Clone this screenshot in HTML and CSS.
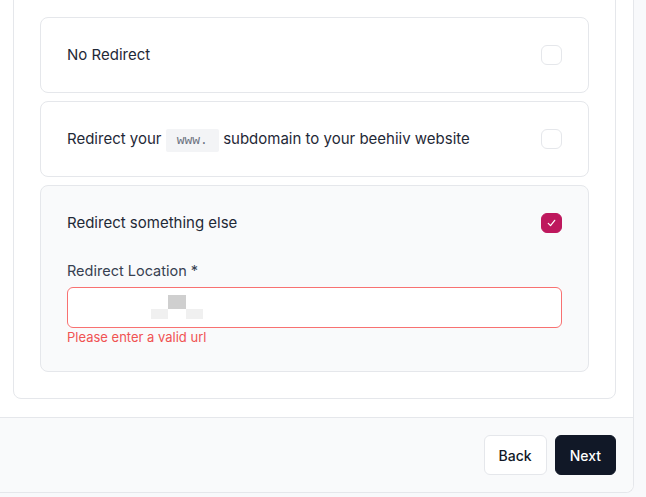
FILE: index.html
```html
<!DOCTYPE html>
<html lang="en">
<head>
<meta charset="utf-8">
<title>Redirect settings</title>
<link rel="stylesheet" href="styles.css">
</head>
<body>
<div class="panel">
  <div class="panel-body">
    <div class="card">
      <div class="option">
        <span class="option-text">No Redirect</span>
        <span class="checkbox"></span>
      </div>
      <div class="option">
        <span class="option-text">Redirect your <code class="code">www.</code> subdomain to your beehiiv website</span>
        <span class="checkbox"></span>
      </div>
      <div class="option option-active">
        <div class="option-row">
          <span class="option-text">Redirect something else</span>
          <span class="checkbox checked">
            <svg viewBox="0 0 20 20" width="20" height="20"><path d="M6.6 10.4l2.4 2.4 4.4-5.6" fill="none" stroke="#fff" stroke-width="1.3" stroke-linecap="round" stroke-linejoin="round"/></svg>
          </span>
        </div>
        <div class="field">
          <label class="field-label">Redirect Location *</label>
          <div class="input">
            <svg class="redacted" viewBox="0 0 52 24" width="52" height="24">
              <rect x="0" y="14" width="17" height="10" fill="#f0f0f0"/>
              <rect x="17" y="0" width="18" height="14" fill="#cfcfcf"/>
              <rect x="35" y="14" width="17" height="10" fill="#f0f0f0"/>
            </svg>
          </div>
          <p class="error">Please enter a valid url</p>
        </div>
      </div>
    </div>
  </div>
  <div class="footer">
    <button class="btn btn-secondary">Back</button>
    <button class="btn btn-primary">Next</button>
  </div>
</div>
</body>
</html>
```
FILE: styles.css
```css
* { box-sizing: border-box; }
html, body { margin: 0; padding: 0; }
body {
  background: #f8f9fb;
  font-family: Inter, "Noto Sans", "Liberation Sans", sans-serif;
  color: #1f2937;
  height: 497px;
  overflow: hidden;
}
.panel {
  width: 634px;
  background: #fff;
  border-right: 1px solid #e5e7eb;
  border-bottom: 1px solid #e5e7eb;
  border-bottom-right-radius: 8px;
  margin-top: -10px;
}
.panel-body {
  padding: 0 17px 18px 13px;
}
.card {
  border: 1px solid #e5e7eb;
  border-radius: 8px;
  padding: 26px;
  display: flex;
  flex-direction: column;
  gap: 8px;
}
.option {
  border: 1px solid #e5e7eb;
  border-radius: 8px;
  padding: 27px 26px;
  display: flex;
  align-items: center;
  justify-content: space-between;
  background: #fff;
}
.option-active {
  background: #f9fafb;
  flex-direction: column;
  align-items: stretch;
  padding-bottom: 26px;
}
.option-row {
  display: flex;
  align-items: center;
  justify-content: space-between;
}
.option-text {
  font-size: 15px;
  line-height: 20px;
  color: #1f2937;
}
.code {
  font-family: "Liberation Mono", "DejaVu Sans Mono", monospace;
  font-size: 13px;
  line-height: 15px;
  color: #6b7280;
  background: #f3f4f6;
  padding: 4px 11px 4px 11px;
  border-radius: 2px;
}
.checkbox {
  width: 21px;
  height: 20px;
  border: 1px solid #e5e7eb;
  border-radius: 6px;
  background: #fff;
  display: flex;
  align-items: center;
  justify-content: center;
  flex-shrink: 0;
}
.checkbox.checked {
  background: #be185d;
  border-color: #be185d;
}
.field {
  margin-top: 28px;
  display: flex;
  flex-direction: column;
}
.field-label {
  font-size: 14.5px;
  line-height: 20px;
  color: #374151;
  margin-bottom: 6px;
}
.input {
  height: 41px;
  border: 1px solid #f87171;
  border-radius: 6px;
  background: #fff;
  display: flex;
  align-items: center;
  padding-left: 83px;
}
.redacted { display: block; margin-top: -1px; }
.error {
  margin: 1px 0 0;
  font-size: 13px;
  line-height: 16px;
  color: #f05252;
}
.footer {
  border-top: 1px solid #e5e7eb;
  background: #f9fafb;
  padding: 17px 17px 17px;
  display: flex;
  justify-content: flex-end;
  gap: 8px;
  border-bottom-right-radius: 8px;
}
.btn {
  height: 40px;
  padding: 0 14px;
  border-radius: 6px;
  font-family: Inter, "Noto Sans", "Liberation Sans", sans-serif;
  font-size: 14px;
  font-weight: 500;
  cursor: pointer;
}
.btn-secondary {
  background: #fff;
  border: 1px solid #e5e7eb;
  color: #111827;
}
.btn-primary {
  background: #111827;
  border: 1px solid #111827;
  color: #fff;
}
```
